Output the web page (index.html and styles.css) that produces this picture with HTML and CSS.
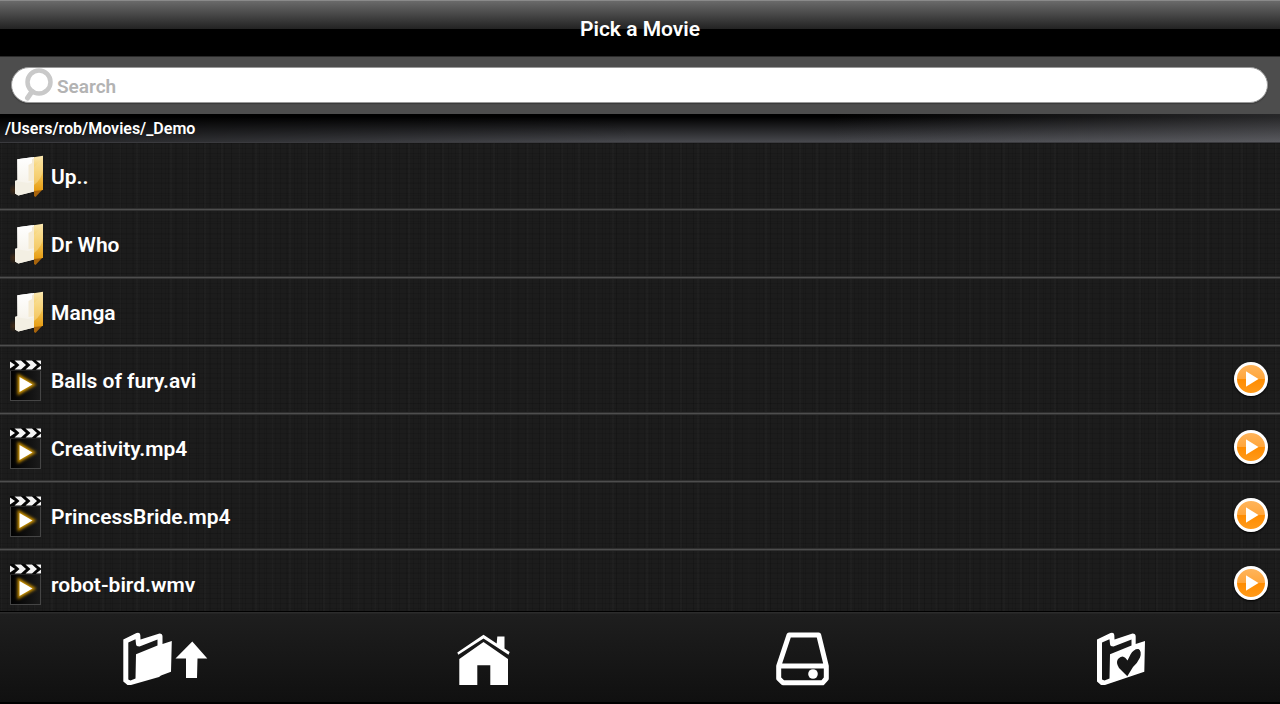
FILE: index.html
```
<!DOCTYPE html>
<html lang="en">
<head>
    <meta charset="UTF-8">
    <meta name="viewport" content="width=device-width, initial-scale=1.0">
    <title>Pick a Movie</title>
    <link rel="stylesheet" href="styles.css">
</head>
<body>
    <!-- Shared icon shapes -->
    <svg class="defs" aria-hidden="true">
        <defs>
            <linearGradient id="gold" x1="0" y1="0" x2="0" y2="1">
                <stop offset="0" stop-color="#fbe9b4"/>
                <stop offset="0.45" stop-color="#f5c95c"/>
                <stop offset="1" stop-color="#e69c12"/>
            </linearGradient>
            <linearGradient id="paper" x1="0" y1="0" x2="0" y2="1">
                <stop offset="0" stop-color="#ffffff"/>
                <stop offset="1" stop-color="#f3eee2"/>
            </linearGradient>
            <linearGradient id="slate" x1="0" y1="0" x2="1" y2="0">
                <stop offset="0" stop-color="#000000"/>
                <stop offset="1" stop-color="#1b1b1b"/>
            </linearGradient>
            <radialGradient id="ember">
                <stop offset="0" stop-color="#8a4a10" stop-opacity="0.35"/>
                <stop offset="1" stop-color="#8a4a10" stop-opacity="0"/>
            </radialGradient>
            <filter id="glow" x="-50%" y="-50%" width="200%" height="200%">
                <feGaussianBlur stdDeviation="1.6"/>
            </filter>
        </defs>
        <symbol id="folder" viewBox="0 0 36 48">
            <circle cx="4" cy="38" r="6" fill="url(#ember)"/>
            <path d="M24 37L33 37L25.5 45L24 44z" fill="#a8640c"/>
            <path d="M22 5.5L33 3.800V38L24 39z" fill="url(#gold)"/>
            <path d="M24 15L33 6V18Q32 27 24 33z" fill="#fae09a" opacity="0.5"/>
            <path d="M7.300 7.300L24 5V38L8 40z" fill="url(#paper)"/>
            <path d="M18 10L24 6V38L18 32z" fill="#f5ebd4"/>
            <path d="M5 28.700L7.300 28V7.300L22 5.200V11L18.500 13V29L24 28.500V39.500L8.300 43.500L5 41.500z" fill="url(#paper)"/>
            <path d="M5 29L18 31L24 29V39.500L8.300 43.500L5 41.500z" fill="#f3efe3"/>
        </symbol>
        <symbol id="movie" viewBox="0 0 36 48">
            <rect x="0.500" y="14.500" width="30" height="30" fill="url(#slate)" stroke="#454545"/>
            <rect x="0" y="4" width="31" height="10.500" fill="#050505"/>
            <path d="M0 5.500L5 9L0 12.500zM4.500 4.500H11L16 9L11 13.500H4.500L9.500 9zM15.500 4.500H22L27 9L22 13.500H15.500L20.500 9zM26 4.500H31V8.500zM26 13.500H31V9.500z" fill="#f4f4f4"/>
            <path d="M9 20L23.500 28.500L9 37z" fill="#e5a800" stroke="#c98f00" stroke-width="3" filter="url(#glow)"/>
            <path d="M9.500 21L22.500 28.500L9.500 36z" fill="#ffffff"/>
        </symbol>
    </svg>

    <header class="titlebar">
        <h1>Pick a Movie</h1>
    </header>

    <form class="searchbar" role="search">
        <label class="searchbox" for="search">
            <svg class="search-icon" viewBox="0 0 30 34" aria-label="Search files">
                <circle cx="15" cy="14" r="11.500" fill="none" stroke="#c9c9c9" stroke-width="4.500"/>
                <path d="M8 23.500L3.500 30" stroke="#c9c9c9" stroke-width="5" stroke-linecap="round"/>
            </svg>
            <input type="search" id="search" name="search" placeholder="Search">
        </label>
    </form>

    <h2 class="path">/Users/rob/Movies/_Demo</h2>

    <ul class="files">
        <li>
            <a href="#up"><svg class="file-icon" aria-hidden="true"><use href="#folder"/></svg><span>Up..</span></a>
        </li>
        <li>
            <a href="#dr-who"><svg class="file-icon" aria-hidden="true"><use href="#folder"/></svg><span>Dr Who</span></a>
        </li>
        <li>
            <a href="#manga"><svg class="file-icon" aria-hidden="true"><use href="#folder"/></svg><span>Manga</span></a>
        </li>
        <li>
            <a href="#balls-of-fury"><svg class="file-icon" aria-hidden="true"><use href="#movie"/></svg><span>Balls of fury.avi</span></a>
            <button class="play" type="button" aria-label="Play Balls of fury.avi"></button>
        </li>
        <li>
            <a href="#creativity"><svg class="file-icon" aria-hidden="true"><use href="#movie"/></svg><span>Creativity.mp4</span></a>
            <button class="play" type="button" aria-label="Play Creativity.mp4"></button>
        </li>
        <li>
            <a href="#princess-bride"><svg class="file-icon" aria-hidden="true"><use href="#movie"/></svg><span>PrincessBride.mp4</span></a>
            <button class="play" type="button" aria-label="Play PrincessBride.mp4"></button>
        </li>
        <li>
            <a href="#robot-bird"><svg class="file-icon" aria-hidden="true"><use href="#movie"/></svg><span>robot-bird.wmv</span></a>
            <button class="play" type="button" aria-label="Play robot-bird.wmv"></button>
        </li>
    </ul>

    <nav class="toolbar">
        <button type="button" aria-label="Parent folder">
            <svg class="tool-icon wide" viewBox="0 0 88 54">
                <path fill-rule="evenodd" d="M3.300 7.500L16.500 1Q20 0 20.300 3L20.500 7.500L39.500 1.500Q42.500 1.500 42.500 4.500V12L51.800 9L51 39.700L41 43.500L39 45L11 53H7.500L3.300 49.500zM8.300 10.500V47.500L10.500 48.500L15.500 46.500L16 22.300L37.500 13.500V7.500L19.500 14.500Q16 14.500 16 12L15.500 7.300z"/>
                <path d="M72.300 9.500L87.300 26.500H77.500L77 46H66V26.500H55.500z"/>
            </svg>
        </button>
        <button type="button" aria-label="Home">
            <svg class="tool-icon" viewBox="0 0 54 54">
                <path d="M1.300 20.500L27.500 2.800L40.700 11.500L41.300 4.500H48.500V16.500L53.700 20L52.500 22.700L27.500 6.500L2.300 22.700z"/>
                <path d="M27.500 10L52 27V53H34.300V33.300H21.300V53H3.300V27z"/>
            </svg>
        </button>
        <button type="button" aria-label="Drives">
            <svg class="tool-icon" viewBox="0 0 54 54">
                <path d="M14 3H43.700L51.300 34V46.500L47.500 50.800H8L3.700 46.500V34zM3.700 34H51.300" fill="none" stroke="#ffffff" stroke-width="5" stroke-linejoin="round"/>
                <circle cx="38" cy="42" r="4.800"/>
            </svg>
        </button>
        <button type="button" aria-label="Favourites">
            <svg class="tool-icon" viewBox="0 0 54 54">
                <path fill-rule="evenodd" d="M3 7.500L16.500 1Q20 0 20.300 3L20.500 7.500L38.500 1.500Q41.700 1.500 41.700 4.500V12L51 9L50.300 39.700L11 53H7L3 49.500zM8 10.500V47.500L10.500 48.500L15.500 46.500L16 22.300L37.500 13.500V7.500L19.500 14.500Q16 14.500 16 12L15.500 7.300z
                    M33.300 44.300L25 36Q21.500 30.500 24 27Q28 22.500 31.500 26L33.500 28.500L36.500 22.500Q40 16.500 44.500 17Q48 19 46 25.500Q43.500 31 39 35z"/>
            </svg>
        </button>
    </nav>
</body>
</html>
```
FILE: styles.css
```
* {
    box-sizing: border-box;
}
body {
    margin: 0;
    height: 100vh;
    display: flex;
    flex-direction: column;
    overflow: hidden;
    font-family: Roboto, sans-serif;
    font-weight: 600;
    color: #ffffff;
    background-color: #1b1b1b;
}
.defs {
    position: absolute;
    width: 0;
    height: 0;
}

/* Title */
.titlebar {
    flex: none;
    height: 57px;
    display: flex;
    align-items: center;
    justify-content: center;
    border-top: 1px solid #8a8a8a;
    border-bottom: 1px solid #2a2a2a;
    background: linear-gradient(#6a6a6a 0, #222222 28px, #000000 28px);
}
h1 {
    margin: 0;
    font-size: 21px;
    font-weight: inherit;
}

/* Search */
.searchbar {
    flex: none;
    padding: 10px 12px 11px 11px;
    background-color: #4d4d4d;
}
.searchbox {
    display: flex;
    align-items: center;
    height: 36px;
    padding: 0 16px 0 12px;
    border: 1px solid #999999;
    border-radius: 18px;
    background-color: #ffffff;
    box-shadow: 0 1px 1px #3a3a3a;
}
.search-icon {
    flex: none;
    width: 30px;
    height: 34px;
}
.searchbox input {
    flex: 1;
    min-width: 0;
    padding: 2px 3px 0;
    border: none;
    outline: none;
    background: none;
    font: inherit;
    font-size: 19px;
    color: #333333;
}
.searchbox input::placeholder {
    color: #b3b3b3;
    opacity: 1;
}

/* Current folder */
.path {
    flex: none;
    margin: 0;
    padding: 2px 5px 0;
    font-size: 16px;
    font-weight: inherit;
    line-height: 26px;
    border-bottom: 1px solid #3a3a3e;
    background:
        linear-gradient(to right, transparent 65%, rgba(130, 130, 135, 0.3)),
        linear-gradient(to right, rgba(0, 0, 0, 0.5), transparent 50%),
        linear-gradient(#000000 10%, #48494e);
}

/* File list, woven background */
.files {
    flex: 1;
    min-height: 0;
    margin: 0;
    padding: 0;
    list-style-type: none;
    overflow-y: auto;
    scrollbar-width: none;
    background:
        repeating-linear-gradient(90deg, rgba(0, 0, 0, 0.1) 0 1px, transparent 1px 7px),
        repeating-linear-gradient(90deg, rgba(0, 0, 0, 0.08) 0 1px, transparent 1px 11px),
        repeating-linear-gradient(90deg, rgba(255, 255, 255, 0.015) 0 2px, transparent 2px 17px),
        repeating-linear-gradient(rgba(0, 0, 0, 0.1) 0 1px, transparent 1px 5px),
        repeating-linear-gradient(rgba(0, 0, 0, 0.08) 0 1px, transparent 1px 13px),
        #1c1c1c;
}
.files li {
    display: flex;
    align-items: center;
    height: 68px;
    padding: 0 12px 1px 10px;
    border-bottom: 1px solid #313131;
    box-shadow: inset 0 -1px #4e4e4e, inset 0 -2px #2e2e2e;
}
.files a {
    flex: 1;
    display: flex;
    align-items: center;
    gap: 5px;
    font-size: 21px;
    color: inherit;
    text-decoration: none;
}
.files span {
    padding-top: 2px;
}
.file-icon {
    width: 36px;
    height: 48px;
}
.play {
    display: flex;
    align-items: center;
    justify-content: center;
    width: 34px;
    height: 34px;
    margin-bottom: 2px;
    padding: 0 0 0 2px;
    border: 3px solid #ffffff;
    border-radius: 50%;
    background: linear-gradient(#ffb45a 0, #ffa63c 50%, #ff8c00 50%, #ff9a1a);
    box-shadow: 0 1px 2px #000000;
    cursor: pointer;
}
.play::before {
    content: "";
    width: 13px;
    height: 16px;
    background-color: #ffffff;
    clip-path: polygon(0 0, 100% 50%, 0 100%);
}

/* Bottom toolbar */
.toolbar {
    flex: none;
    height: 93px;
    padding-left: 5px;
    display: grid;
    grid-template-columns: repeat(4, 1fr);
    border-top: 1px solid #000000;
    border-bottom: 2px solid #000000;
    background: linear-gradient(#2c2c2c 0, #2c2c2c 1px, #1e1e1e 2px, #101010);
}
.toolbar button {
    display: flex;
    align-items: center;
    justify-content: center;
    padding: 3px 0 0;
    border: none;
    background: none;
    cursor: pointer;
}
.tool-icon {
    width: 54px;
    height: 54px;
    fill: #ffffff;
}
.tool-icon.wide {
    width: 88px;
}
```
